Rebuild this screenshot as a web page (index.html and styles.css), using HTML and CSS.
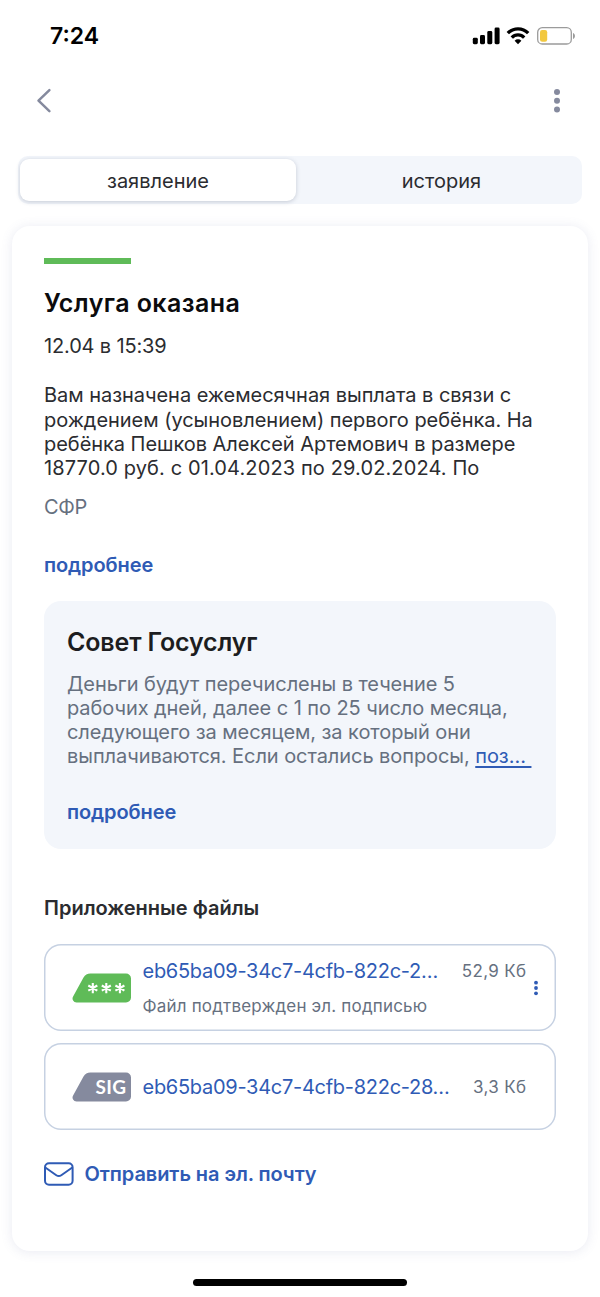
FILE: index.html
```
<!DOCTYPE html>
<html lang="ru">
<head>
<meta charset="utf-8">
<title>Услуга оказана</title>
<link rel="stylesheet" href="styles.css">
</head>
<body>
<header class="status">
  <span class="clock">7:24</span>
  <svg class="status-icons" width="104" height="20" viewBox="0 0 104 20">
    <rect x="0.8" y="11.8" width="5" height="6.4" rx="1.4"/>
    <rect x="8" y="9" width="5" height="9.2" rx="1.4"/>
    <rect x="15.3" y="5" width="5" height="13.2" rx="1.4"/>
    <rect x="22.6" y="1.5" width="5" height="16.7" rx="1.4"/>
    <g fill="none" stroke="#000" stroke-width="3.3">
      <path d="M35.8 7.2a14 14 0 0 1 20.4 0"/>
      <path d="M39.8 11.6a8.5 8.5 0 0 1 12.4 0"/>
    </g>
    <path d="M46 18.3l-3.4-3.6a4.9 4.9 0 0 1 6.8 0z"/>
    <rect x="65.7" y="1.7" width="33.6" height="16.3" rx="4.6" fill="#fff" stroke="#9b9b9b" stroke-width="1.3"/>
    <rect x="68" y="4" width="7.2" height="11.8" rx="2.2" fill="#f2c83f"/>
    <path d="M101 7c2.6 1 2.6 5 0 6z" fill="#9b9b9b"/>
  </svg>
</header>
<nav class="nav">
  <svg width="16" height="26" viewBox="0 0 16 26"><path d="M13.4 2.2L2.500 12.700l10.900 10.500" fill="none" stroke="#858a9e" stroke-width="2.5" stroke-linecap="round" stroke-linejoin="round"/></svg>
  <svg width="8" height="26" viewBox="0 0 8 26" fill="#858a9e"><circle cx="4" cy="4" r="3"/><circle cx="4" cy="12.700" r="3"/><circle cx="4" cy="21.400" r="3"/></svg>
</nav>
<div class="tabs">
  <div class="tab tab-active">заявление</div>
  <div class="tab">история</div>
</div>
<main class="card">
  <div class="mark"></div>
  <h1 class="title">Услуга оказана</h1>
  <p class="date">12.04 в 15:39</p>
  <p class="body">Вам назначена ежемесячная выплата в связи с<br>рождением (усыновлением) первого ребёнка. На<br>ребёнка Пешков Алексей Артемович в размере<br><span class="figures">18770.0 руб. с 01.04.2023 по 29.02.2024. По</span></p>
  <p class="org">СФР</p>
  <a class="more">подробнее</a>
  <section class="tip">
    <h2 class="title tip-title">Совет Госуслуг</h2>
    <p class="body tip-body">Деньги будут перечислены в течение 5<br>рабочих дней, далее с 1 по 25 число месяца,<br>следующего за месяцем, за который они<br>выплачиваются. Если остались вопросы, <a class="inline-link">поз…&nbsp;</a></p>
    <a class="more tip-more">подробнее</a>
  </section>
  <h3 class="files-title">Приложенные файлы</h3>
  <div class="files">
    <div class="file">
      <svg class="badge" width="60" height="30" viewBox="0 0 60 30">
        <path d="M18.5 .5H54a5 5 0 0 1 5 5v19a5 5 0 0 1-5 5H4.500a4 4 0 0 1-3.400-6L11.500 4.500a8 8 0 0 1 7-4z" fill="#5fbb58"/>
        <path d="M20.800 9.900v10.400M16.300 12.500l9 5.200M25.300 12.500l-9 5.200M34.300 9.900v10.400M29.800 12.500l9 5.200M38.800 12.500l-9 5.200M47.900 9.900v10.400M43.400 12.500l9 5.200M52.400 12.500l-9 5.200" stroke="#fff" stroke-width="2.100" fill="none"/>
      </svg>
      <div class="info">
        <div class="row"><a class="name">eb65ba09-34c7-4cfb-822c-2…</a><span class="size">52,9 Кб</span></div>
        <div class="signed">Файл подтвержден эл. подписью</div>
      </div>
      <svg class="dots" width="6" height="16" viewBox="0 0 6 16" fill="#2f5bb5"><circle cx="3" cy="2.700" r="1.900"/><circle cx="3" cy="8" r="1.900"/><circle cx="3" cy="13.300" r="1.900"/></svg>
    </div>
    <div class="file">
      <svg class="badge" width="60" height="30" viewBox="0 0 60 30">
        <path d="M18.500 .5H54a5 5 0 0 1 5 5v19a5 5 0 0 1-5 5H4.500a4 4 0 0 1-3.400-6L11.500 4.500a8 8 0 0 1 7-4z" fill="#858a9e"/>
        <text class="badge-text" x="23.500" y="21.800" textLength="30.500">SIG</text>
      </svg>
      <div class="info">
        <div class="row"><a class="name">eb65ba09-34c7-4cfb-822c-28…</a><span class="size">3,3 Кб</span></div>
      </div>
    </div>
  </div>
  <a class="mail">
    <svg width="30" height="24" viewBox="0 0 30 24" fill="none" stroke="#2f5bb5" stroke-width="2" stroke-linejoin="round"><rect x="1" y="1.200" width="27.600" height="21.600" rx="4"/><path d="M1.300 5.500l11 7.700c1.600 1.100 3.400 1.100 5 0l11-7.700"/></svg>
    <span class="mail-label">Отправить на эл. почту</span>
  </a>
</main>
<div class="home"></div>
</body>
</html>
```
FILE: styles.css
```
* { box-sizing: border-box; margin: 0; padding: 0; }
body {
  width: 600px; height: 1297px; overflow: hidden;
  background: #fff; color: #2b2c30;
  font-family: Inter, "Noto Sans", sans-serif;
  font-size: 20px; line-height: 24px; font-weight: 400;
  display: flex; flex-direction: column;
}
.status { height: 72px; padding: 0 24px 0 50px; display: flex; align-items: center; justify-content: space-between; }
.clock { font-size: 23px; font-weight: 600; color: #000; }
.nav { height: 57px; padding: 0 39.5px 0 35.5px; display: flex; align-items: center; justify-content: space-between; }
.tabs { height: 48px; margin: 27px 18px 0; padding: 3px 2px; border-radius: 10px; background: #f3f6fb; display: flex; }
.tab { flex: 1; border-radius: 9px; line-height: 44px; text-align: center; padding-left: 7px; }
.tab-active { flex: 0 0 276px; padding-left: 0; background: #fff; box-shadow: 0 1px 4px rgba(60,70,100,.25); }
.card {
  height: 1025px; margin: 22px 12px 0; padding: 32px 32px 0 31.5px;
  border-radius: 18px; background: #fff; box-shadow: 0 1px 12px rgba(100,105,160,.14);
  display: flex; flex-direction: column; align-items: flex-start;
}
.card > * { flex-shrink: 0; }
.mark { width: 87px; height: 6px; background: #5fbb58; }
.title { margin-top: 24px; padding-left: .5px; font-size: 25px; line-height: 30px; font-weight: 600; color: #0b0b0d; white-space: nowrap; letter-spacing: .43px; }
.date { margin-top: 16px; padding-left: .5px; letter-spacing: -.15px; }
.body { margin-top: 25.4px; padding-left: .5px; line-height: 24.2px; white-space: nowrap; letter-spacing: -.04px; }
.figures { letter-spacing: .12px; }
.org { margin-top: 14.6px; padding-left: .5px; color: #66707f; letter-spacing: -.3px; }
.more { margin-top: 34px; padding-left: .5px; color: #2f5bb5; font-weight: 600; letter-spacing: -.1px; }
.tip { align-self: stretch; height: 248px; margin-top: 24px; padding: 26px 23px; border-radius: 17px; background: #f3f6fb; display: flex; flex-direction: column; align-items: flex-start; }
.tip-title { margin-top: 0; letter-spacing: -.15px; color: #1c1d20; }
.tip-body { margin-top: 15px; color: #66707f; letter-spacing: -.07px; }
.tip-more { margin-top: 31px; }
.inline-link { color: #2f5bb5; text-decoration: underline; text-decoration-thickness: 1.5px; text-underline-offset: 3px; }
.files-title { margin-top: 47px; padding-left: .5px; font-size: 20px; font-weight: 600; }
.files { align-self: stretch; margin-top: 24px; display: flex; flex-direction: column; gap: 12px; }
.file { height: 87px; padding: 2px 17px 0 28px; border-radius: 17px; box-shadow: inset 0 0 0 1.5px #c6d1e2; display: flex; align-items: center; }
.badge { flex: none; margin-right: 11px; }
.info { width: 384px; }
.badge-text { font-family: Lato, sans-serif; font-size: 19px; font-weight: 700; fill: #fff; }
.row { display: flex; justify-content: space-between; align-items: center; white-space: nowrap; }
.name { color: #2f5bb5; letter-spacing: -.28px; }
.size { font-size: 17px; color: #66707f; line-height: 22px; letter-spacing: .35px; }
.signed { margin-top: 11px; font-size: 17px; line-height: 24px; color: #66707f; white-space: nowrap; letter-spacing: .18px; }
.dots { margin-left: 6px; }
.mail { margin-top: 32px; display: flex; align-items: center; gap: 11px; color: #2f5bb5; font-weight: 600; white-space: nowrap; letter-spacing: -.08px; }
.home { width: 214px; height: 7px; margin: 28px auto 0; border-radius: 4px; background: #000; }
```
